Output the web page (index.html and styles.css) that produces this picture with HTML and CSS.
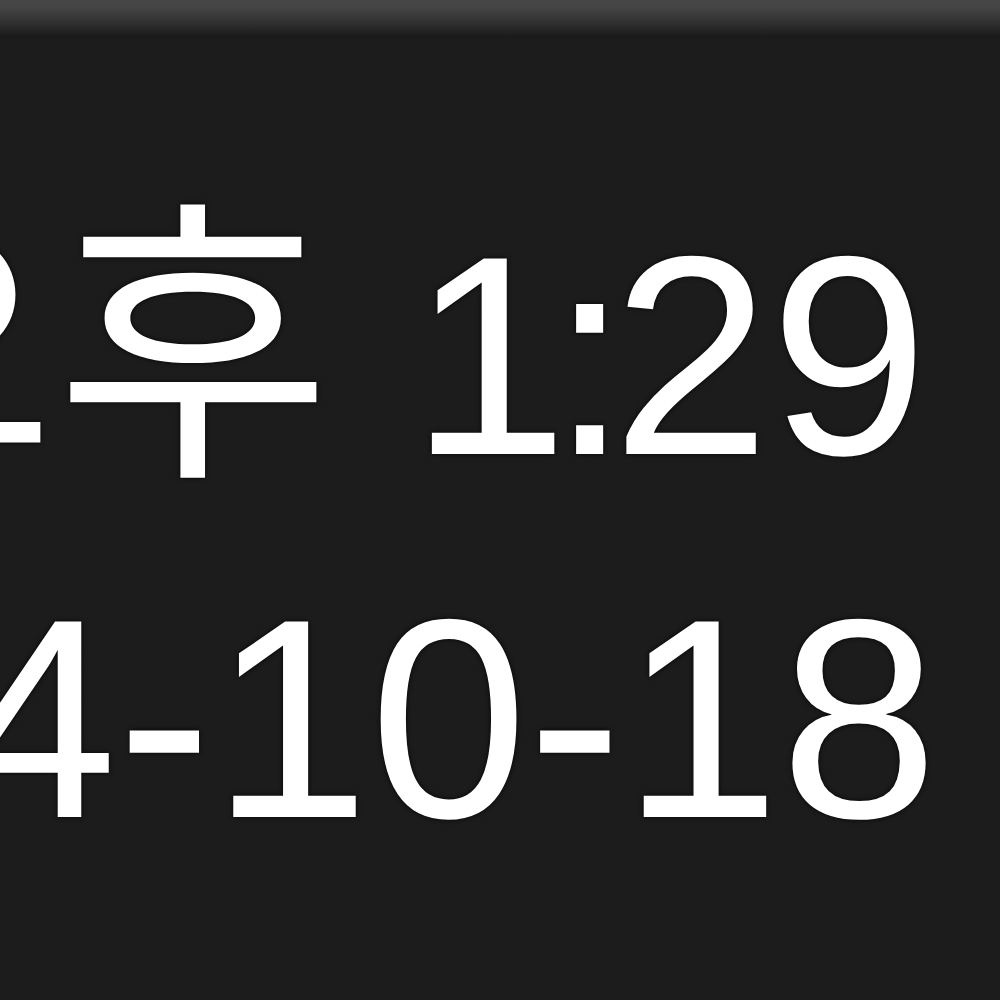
FILE: index.html
```html
<!DOCTYPE html>
<html lang="ko">
<head>
<meta charset="utf-8">
<link rel="stylesheet" href="styles.css">
</head>
<body>
<div class="taskbar">
  <div class="edge"></div>
  <div class="clock">
    <div class="line time"><span class="ampm">오후</span> <span class="hour">1</span><span class="colon">:</span>29</div>
    <div class="line date">2024-10-18</div>
  </div>
</div>
</body>
</html>
```
FILE: styles.css
```css
html, body {
  margin: 0;
  padding: 0;
  width: 1000px;
  height: 1000px;
  overflow: hidden;
  background: #1c1c1c;
}
.taskbar {
  width: 1000px;
  height: 1000px;
  display: flex;
  flex-direction: column;
  overflow: hidden;
  background: #1c1c1c;
}
.edge {
  height: 40px;
  flex: none;
  background: linear-gradient(to bottom, #464646 0px, #444444 8px, #2e2e2e 24px, #1a1a1a 37px, #1c1c1c 40px);
}
.clock {
  display: flex;
  flex-direction: column;
  align-items: flex-end;
  margin-top: 134px;
  padding-right: 62px;
  font-family: "Liberation Sans", "Noto Sans CJK KR", sans-serif;
  font-size: 284px;
  color: #ffffff;
  white-space: nowrap;
}
.line {
  line-height: 363px;
  text-shadow: 0 0 5px rgba(0, 0, 0, 0.9);
}
.time {
  padding-right: 10px;
}
.ampm {
  font-size: 300px;
  line-height: 1;
}
.hour {
  letter-spacing: -18px;
}
.colon {
  letter-spacing: -17px;
}
```
